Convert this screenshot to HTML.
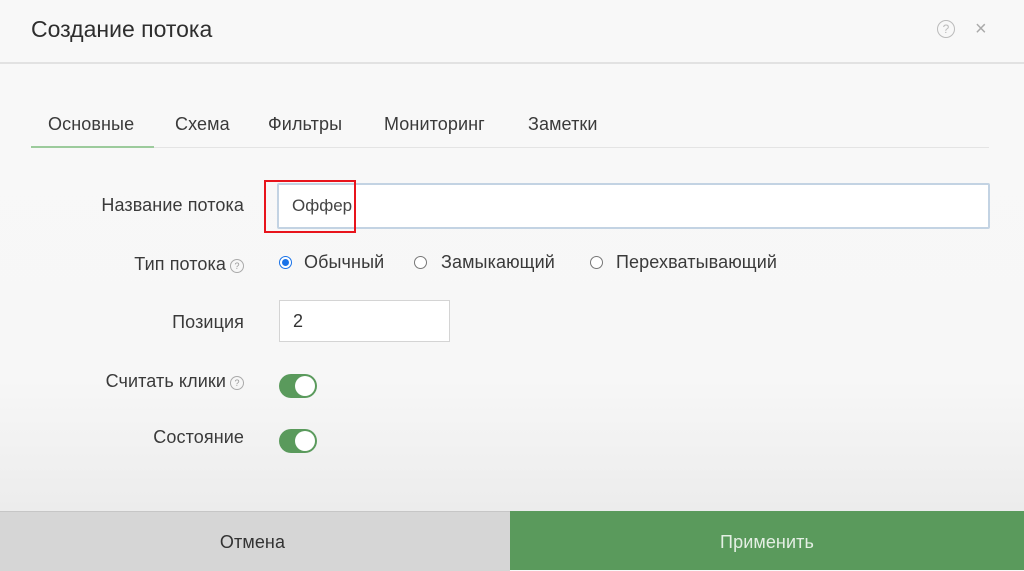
<!DOCTYPE html>
<html><head><meta charset="utf-8"><style>
body{margin:0;width:1024px;height:570px;overflow:hidden;font-family:"Liberation Sans",sans-serif;color:#333;position:relative;background:linear-gradient(#f8f8f8 0,#f7f7f7 380px,#ececec 510px)}
.a{position:absolute;white-space:nowrap}
.lbl{font-size:18px;letter-spacing:0.1px;color:#3a3a3a}
.r{right:780px;text-align:right}
.q{display:inline-block;width:12px;height:12px;border:1px solid #aaa;border-radius:50%;font-size:9px;line-height:12px;text-align:center;color:#999;vertical-align:1px;margin-left:4px;letter-spacing:0}
.radio{position:absolute;width:11px;height:11px;border:1px solid #777;border-radius:50%;background:#fff}
.tog{position:absolute;width:38px;height:24px;border-radius:12px;background:#5a9a5c}
.tog::after{content:"";position:absolute;right:2px;top:2px;width:20px;height:20px;border-radius:50%;background:#fff}
</style></head><body>
<div class="a" style="left:31px;top:16px;font-size:23px;color:#2e2e2e">Создание потока</div>
<div class="a" style="left:937px;top:20px;width:16px;height:16px;border:1.5px solid #bbb;border-radius:50%;font-size:12px;line-height:16px;text-align:center;color:#bbb">?</div>
<div class="a" style="left:975px;top:18px;font-size:20px;color:#aaa">×</div>
<div class="a" style="left:0;top:62px;width:1024px;height:2px;background:#e2e2e2"></div>
<div class="a lbl" style="left:48px;top:114px">Основные</div>
<div class="a lbl" style="left:175px;top:114px">Схема</div>
<div class="a lbl" style="left:268px;top:114px">Фильтры</div>
<div class="a lbl" style="left:384px;top:114px">Мониторинг</div>
<div class="a lbl" style="left:528px;top:114px">Заметки</div>
<div class="a" style="left:31px;top:147px;width:958px;height:1px;background:#e4e4e4"></div>
<div class="a" style="left:31px;top:146px;width:123px;height:2px;background:#9ccb9c"></div>
<div class="a lbl r" style="top:195px">Название потока</div>
<div class="a" style="left:277px;top:183px;width:709px;height:42px;background:#fff;border:2px solid #c3d3e3;border-radius:2px"></div>
<div class="a" style="left:292px;top:196px;font-size:17px;color:#444">Оффер</div>
<div class="a" style="left:264px;top:180px;width:88px;height:49px;border:2.5px solid #e8141c"></div>
<div class="a lbl r" style="top:254px">Тип потока<span class="q">?</span></div>
<div class="radio" style="left:279px;top:256px;border-color:#1a73e8"><div style="position:absolute;left:2px;top:2px;width:7px;height:7px;border-radius:50%;background:#1a73e8"></div></div>
<div class="a lbl" style="left:304px;top:252px">Обычный</div>
<div class="radio" style="left:414px;top:256px"></div>
<div class="a lbl" style="left:441px;top:252px">Замыкающий</div>
<div class="radio" style="left:590px;top:256px"></div>
<div class="a lbl" style="left:616px;top:252px">Перехватывающий</div>
<div class="a lbl r" style="top:312px">Позиция</div>
<div class="a" style="left:279px;top:300px;width:169px;height:40px;background:#fff;border:1px solid #d4d4d4"></div>
<div class="a" style="left:293px;top:311px;font-size:18px;color:#333">2</div>
<div class="a lbl r" style="top:371px">Считать клики<span class="q">?</span></div>
<div class="tog" style="left:279px;top:374px"></div>
<div class="a lbl r" style="top:427px">Состояние</div>
<div class="tog" style="left:279px;top:429px"></div>
<div class="a" style="left:0;top:511px;width:510px;height:59px;background:#d6d6d6;border-top:1px solid #c6c6c6"></div>
<div class="a lbl" style="left:0;width:505px;text-align:center;top:532px;color:#333">Отмена</div>
<div class="a" style="left:510px;top:511px;width:514px;height:59px;background:#5a9a5c"></div>
<div class="a lbl" style="left:510px;width:514px;text-align:center;top:532px;color:#e4efe4">Применить</div>
</body></html>
